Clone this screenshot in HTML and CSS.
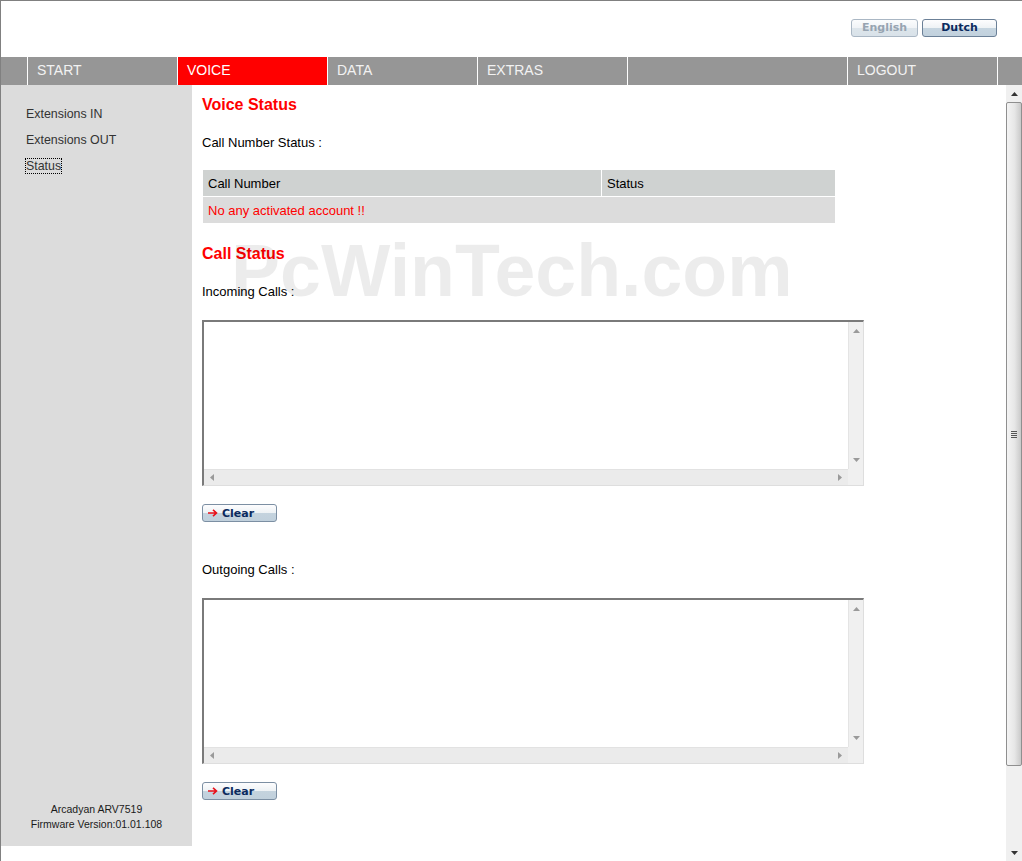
FILE: index.html
```html
<!DOCTYPE html>
<html lang="en">

<head>
    <meta charset="UTF-8">
    <title>Voice Status</title>
    <link rel="stylesheet" href="styles.css">
</head>

<body>
    <div class="window">
        <header class="topbar">
            <div class="lang">
                <button class="lang-btn lang-off">English</button>
                <button class="lang-btn lang-dutch">Dutch</button>
            </div>
        </header>

        <nav class="menu">
            <span class="menu-gap"></span>
            <a class="menu-item">START</a>
            <a class="menu-item active">VOICE</a>
            <a class="menu-item">DATA</a>
            <a class="menu-item">EXTRAS</a>
            <span class="menu-item menu-blank"></span>
            <a class="menu-item">LOGOUT</a>
        </nav>

        <div class="main">
            <aside class="side">
                <div class="side-panel">
                    <ul class="side-links">
                        <li><a>Extensions IN</a></li>
                        <li><a>Extensions OUT</a></li>
                        <li><a class="focused">Status</a></li>
                    </ul>
                    <div class="side-foot">
                        Arcadyan ARV7519<br>
                        Firmware Version:01.01.108
                    </div>
                </div>
            </aside>

            <section class="content">
                <div class="watermark">PcWinTech.com</div>

                <h2 class="title">Voice Status</h2>
                <p class="label label-first">Call Number Status :</p>

                <table class="status-table">
                    <tr>
                        <th class="col-number">Call Number</th>
                        <th>Status</th>
                    </tr>
                    <tr>
                        <td colspan="2" class="no-account">No any activated account !!</td>
                    </tr>
                </table>

                <h2 class="title title-calls">Call Status</h2>
                <p class="label label-in">Incoming Calls :</p>
                <div class="callbox">
                    <div class="cb-text"></div>
                    <div class="cb-v">
                        <svg width="7" height="4" viewBox="0 0 7 4"><path d="M0 4L3.5 0L7 4Z" fill="#9a9a9a"/></svg>
                        <svg width="7" height="4" viewBox="0 0 7 4"><path d="M0 0L3.5 4L7 0Z" fill="#9a9a9a"/></svg>
                    </div>
                    <div class="cb-h">
                        <svg width="4" height="7" viewBox="0 0 4 7"><path d="M4 0L0 3.5L4 7Z" fill="#9a9a9a"/></svg>
                        <svg width="4" height="7" viewBox="0 0 4 7"><path d="M0 0L4 3.5L0 7Z" fill="#9a9a9a"/></svg>
                    </div>
                    <div class="cb-corner"></div>
                </div>
                <button class="btn-clear">
                    <svg width="10" height="8" viewBox="0 0 10 8"><path d="M0 4H8.5M5 0.8L8.5 4L5 7.2" stroke="#e8101a" stroke-width="1.6" fill="none"/></svg>
                    Clear
                </button>

                <p class="label label-out">Outgoing Calls :</p>
                <div class="callbox">
                    <div class="cb-text"></div>
                    <div class="cb-v">
                        <svg width="7" height="4" viewBox="0 0 7 4"><path d="M0 4L3.5 0L7 4Z" fill="#9a9a9a"/></svg>
                        <svg width="7" height="4" viewBox="0 0 7 4"><path d="M0 0L3.5 4L7 0Z" fill="#9a9a9a"/></svg>
                    </div>
                    <div class="cb-h">
                        <svg width="4" height="7" viewBox="0 0 4 7"><path d="M4 0L0 3.5L4 7Z" fill="#9a9a9a"/></svg>
                        <svg width="4" height="7" viewBox="0 0 4 7"><path d="M0 0L4 3.5L0 7Z" fill="#9a9a9a"/></svg>
                    </div>
                    <div class="cb-corner"></div>
                </div>
                <button class="btn-clear">
                    <svg width="10" height="8" viewBox="0 0 10 8"><path d="M0 4H8.5M5 0.8L8.5 4L5 7.2" stroke="#e8101a" stroke-width="1.6" fill="none"/></svg>
                    Clear
                </button>
            </section>

            <div class="scrollbar">
                <div class="sb-btn">
                    <svg width="7" height="4" viewBox="0 0 7 4"><path d="M0 4L3.5 0L7 4Z" fill="#333"/></svg>
                </div>
                <div class="sb-thumb">
                    <span class="grip"></span>
                </div>
                <div class="sb-track"></div>
                <div class="sb-btn">
                    <svg width="7" height="4" viewBox="0 0 7 4"><path d="M0 0L3.5 4L7 0Z" fill="#333"/></svg>
                </div>
            </div>
        </div>
    </div>
</body>

</html>
```

FILE: styles.css
```css
html,
body {
    margin: 0;
    padding: 0;
}

body {
    font-family: Arial, "Liberation Sans", sans-serif;
    background-color: #fff;
    color: #000;
    width: 1022px;
    height: 861px;
    overflow: hidden;
}

.window {
    height: 861px;
    box-sizing: border-box;
    border-top: 1px solid #808080;
    border-left: 1px solid #808080;
    display: flex;
    flex-direction: column;
}

/* top strip with language buttons */
.topbar {
    height: 56px;
    flex-shrink: 0;
    box-sizing: border-box;
    padding: 18px 25px 0 0;
    display: flex;
    justify-content: flex-end;
    align-items: flex-start;
}

.lang {
    display: flex;
    gap: 4px;
}

.lang-btn {
    height: 18px;
    padding: 0;
    font-family: "DejaVu Sans", Verdana, sans-serif;
    font-size: 11px;
    font-weight: bold;
    line-height: 16px;
    border-radius: 3px;
    cursor: pointer;
}

.lang-off {
    width: 67px;
    color: #97a4b1;
    border: 1px solid #aab7c4;
    background: linear-gradient(#fbfcfd, #f0f3f6 50%, #dde5eb 52%, #d9e2e9);
}

.lang-dutch {
    width: 75px;
    color: #0b2a5e;
    border: 1px solid #6b8097;
    background: linear-gradient(#fdfdfe, #eef2f5 50%, #c6d5e0 52%, #c1d1dd);
}

/* main menu */
.menu {
    display: flex;
    height: 28px;
    flex-shrink: 0;
    background-color: #969696;
}

.menu-gap {
    width: 27px;
    box-sizing: border-box;
    border-right: 1px solid #fff;
}

.menu-item {
    width: 150px;
    box-sizing: border-box;
    border-right: 1px solid #fff;
    padding-left: 9px;
    color: #f2f2f2;
    font-size: 14px;
    line-height: 27px;
    cursor: pointer;
}

.menu-item.active {
    background-color: #ff0000;
    color: #fff;
}

.menu-blank {
    width: 220px;
}

.main {
    flex: 1;
    display: flex;
    min-height: 0;
}

/* left frame */
.side {
    width: 191px;
    flex-shrink: 0;
    background-color: #fff;
}

.side-panel {
    height: 761px;
    background-color: #dcdcdc;
    display: flex;
    flex-direction: column;
}

.side-links {
    list-style: none;
    margin: 0;
    padding: 16px 0 0 25px;
}

.side-links li {
    line-height: 26px;
    font-size: 12.4px;
}

.side-links a {
    color: #333;
    cursor: pointer;
}

.side-links a.focused {
    outline: 1px dotted #000;
}

.side-foot {
    margin-top: auto;
    padding-bottom: 14px;
    text-align: center;
    font-size: 10.5px;
    line-height: 15px;
    color: #1a1a1a;
}

/* right frame */
.content {
    position: relative;
    flex: 1;
    padding: 10px 10px 0;
    overflow: hidden;
}

.watermark {
    position: absolute;
    left: 39px;
    top: 149px;
    font-size: 73.5px;
    line-height: 73px;
    font-weight: bold;
    color: rgba(0, 0, 0, 0.075);
    white-space: nowrap;
    pointer-events: none;
}

.title {
    margin: 0;
    font-size: 16px;
    line-height: 20px;
    font-weight: bold;
    color: #ff0000;
}

.title-calls {
    margin-top: 20px;
}

.label {
    margin: 0;
    font-size: 13px;
    line-height: 16px;
}

.label-first {
    margin-top: 20px;
}

.label-in {
    margin-top: 20px;
}

.label-out {
    margin-top: 40px;
}

.status-table {
    margin-top: 18px;
    width: 634px;
    border-spacing: 1px;
    font-size: 13px;
}

.status-table th,
.status-table td {
    height: 26px;
    padding: 0 0 0 5px;
    text-align: left;
    font-weight: normal;
}

.status-table th {
    background-color: #cfd2d1;
}

.status-table .col-number {
    width: 393px;
}

.status-table td {
    background-color: #dcdcdc;
}

.no-account {
    color: #ff0000;
}

/* read-only call log box */
.callbox {
    margin-top: 20px;
    width: 662px;
    height: 166px;
    box-sizing: border-box;
    border-top: 2px solid #7a7a7a;
    border-left: 2px solid #7a7a7a;
    border-right: 1px solid #dedede;
    border-bottom: 1px solid #dedede;
    display: grid;
    grid-template-columns: 1fr 15px;
    grid-template-rows: 1fr 16px;
}

.cb-text {
    background-color: #fff;
}

.cb-v {
    background-color: #f0f0f0;
    border-left: 1px solid #e4e4e4;
    display: flex;
    flex-direction: column;
    justify-content: space-between;
    align-items: center;
    padding: 7px 0 7px;
}

.cb-h {
    background-color: #ebebeb;
    border-top: 1px solid #e2e2e2;
    display: flex;
    justify-content: space-between;
    align-items: center;
    padding: 0 6px;
}

.cb-corner {
    background-color: #f0f0f0;
}

.btn-clear {
    display: flex;
    align-items: center;
    gap: 4px;
    margin-top: 18px;
    width: 75px;
    height: 18px;
    padding: 0 0 0 5px;
    border: 1px solid #7c8fa3;
    border-radius: 3px;
    background: linear-gradient(#fdfdfe, #eef2f5 48%, #c4d3de 50%, #c0d0dc);
    color: #0b2a5e;
    font-family: "DejaVu Sans", Verdana, sans-serif;
    font-size: 11px;
    font-weight: bold;
    cursor: pointer;
}

/* frame scrollbar */
.scrollbar {
    width: 16px;
    flex-shrink: 0;
    background-color: #f0f0f0;
    display: flex;
    flex-direction: column;
}

.sb-btn {
    height: 17px;
    display: flex;
    align-items: center;
    justify-content: center;
}

.sb-thumb {
    height: 664px;
    box-sizing: border-box;
    border: 1px solid #8f8f8f;
    border-radius: 2px;
    background: linear-gradient(to right, #f4f4f4, #e6e6e6 55%, #c9c9c9);
    display: flex;
    align-items: center;
    justify-content: center;
}

.grip {
    width: 6px;
    height: 7px;
    background: repeating-linear-gradient(#555 0, #555 1px, transparent 1px, transparent 2px);
}

.sb-track {
    flex: 1;
}
```
